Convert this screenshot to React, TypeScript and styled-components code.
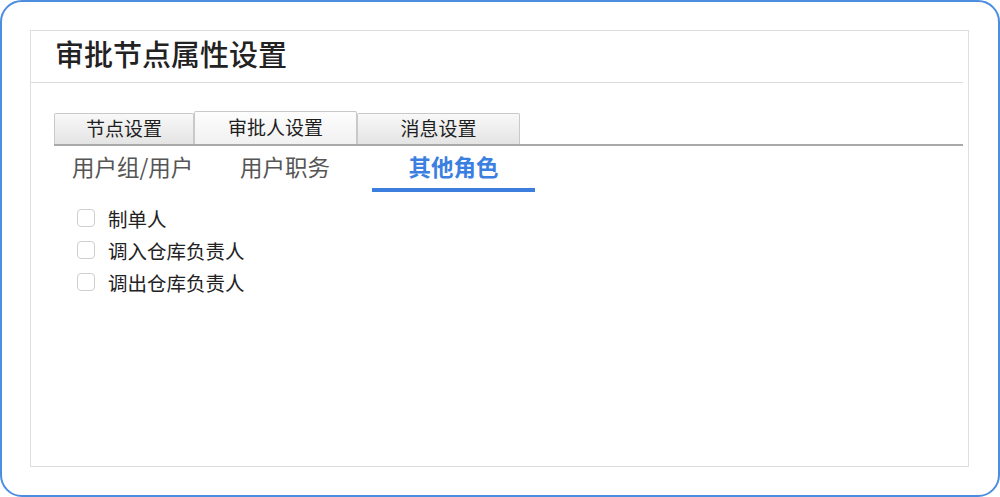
import React, { useState } from 'react';
import styled, { createGlobalStyle } from 'styled-components';

const GlobalStyle = createGlobalStyle`
  html, body {
    margin: 0;
    padding: 0;
    background: #ffffff;
  }
  body {
    font-family: "Noto Sans CJK SC", "Noto Sans", sans-serif;
    color: #222;
  }
`;

const Frame = styled.div`
  box-sizing: border-box;
  width: 1000px;
  height: 497px;
  border: 2px solid #4b8ddf;
  border-radius: 22px;
  background: #fff;
  padding: 28px 29px 28px 28px;
  display: flex;
`;

const Panel = styled.div`
  flex: 1;
  border: 1px solid #dedede;
  display: flex;
  flex-direction: column;
`;

const Header = styled.div`
  box-sizing: border-box;
  height: 52px;
  margin-right: 5px;
  border-bottom: 1px solid #dcdcdc;
  display: flex;
  align-items: center;
  padding: 0 0 7px 24px;
`;

const Title = styled.h1`
  margin: 0;
  font-size: 29px;
  font-weight: 500;
  color: #222;
  line-height: 1;
`;

const TabBar = styled.div`
  margin: 28px 5px 0 23px;
  height: 33px;
  display: flex;
  align-items: flex-end;
  border-bottom: 2px solid #a9a9a9;
`;

const Tab = styled.button<{ $active: boolean; $w: number }>`
  box-sizing: border-box;
  width: ${p => p.$w}px;
  height: ${p => (p.$active ? 33 : 31)}px;
  margin: 0;
  padding: 0 0 ${p => (p.$active ? 4 : 3)}px;
  border: 1px solid #c9c9c9;
  border-bottom: none;
  border-radius: 2px 2px 0 0;
  background: ${p =>
    p.$active
      ? 'linear-gradient(#fdfdfd, #f1f1f1)'
      : 'linear-gradient(#f8f8f8, #e4e4e4)'};
  font-family: inherit;
  font-size: 19px;
  color: #1e1e1e;
  line-height: 1;
  cursor: pointer;
`;

const SubTabs = styled.div`
  display: flex;
  padding-left: 41px;
  height: 46px;
`;

const SubTab = styled.div<{ $active: boolean; $w: number; $center?: boolean }>`
  box-sizing: border-box;
  width: ${p => p.$w}px;
  display: flex;
  align-items: center;
  justify-content: ${p => (p.$center ? 'center' : 'flex-start')};
  padding-bottom: 3px;
  font-size: 22.5px;
  font-weight: ${p => (p.$active ? 700 : 400)};
  color: ${p => (p.$active ? '#3b80e0' : '#555')};
  border-bottom: 4px solid ${p => (p.$active ? '#3b7ede' : 'transparent')};
  cursor: pointer;
`;

const RoleList = styled.div`
  display: flex;
  flex-direction: column;
  padding: 10px 0 0 46px;
`;

const RoleRow = styled.label`
  height: 32px;
  display: flex;
  align-items: center;
  gap: 13px;
  font-size: 19.5px;
  color: #222;
  cursor: pointer;
`;

const Box = styled.span<{ $checked: boolean }>`
  box-sizing: border-box;
  width: 18px;
  height: 18px;
  border: 1px solid #cfcfcf;
  border-radius: 4px;
  background: ${p => (p.$checked ? '#3b80e0' : '#fff')};
`;

const tabs = [
  { id: 'node', label: '节点设置', w: 140 },
  { id: 'approver', label: '审批人设置', w: 163 },
  { id: 'message', label: '消息设置', w: 163 },
];

const subTabs = [
  { id: 'group', label: '用户组/用户', w: 168 },
  { id: 'duty', label: '用户职务', w: 132 },
  { id: 'other', label: '其他角色', w: 163 },
];

const roles = ['制单人', '调入仓库负责人', '调出仓库负责人'];

export default function App() {
  const [tab, setTab] = useState('approver');
  const [sub, setSub] = useState('other');
  const [checked, setChecked] = useState<string[]>([]);

  const toggle = (r: string) =>
    setChecked(c => (c.includes(r) ? c.filter(x => x !== r) : [...c, r]));

  return (
    <>
      <GlobalStyle />
      <Frame>
        <Panel>
          <Header>
            <Title>审批节点属性设置</Title>
          </Header>
          <TabBar>
            {tabs.map(t => (
              <Tab key={t.id} $w={t.w} $active={tab === t.id} onClick={() => setTab(t.id)}>
                {t.label}
              </Tab>
            ))}
          </TabBar>
          <SubTabs>
            {subTabs.map(s => (
              <SubTab
                key={s.id}
                $w={s.w}
                $center={s.id === 'other'}
                $active={sub === s.id}
                onClick={() => setSub(s.id)}
              >
                {s.label}
              </SubTab>
            ))}
          </SubTabs>
          <RoleList>
            {roles.map(r => (
              <RoleRow key={r} onClick={() => toggle(r)}>
                <Box $checked={checked.includes(r)} />
                {r}
              </RoleRow>
            ))}
          </RoleList>
        </Panel>
      </Frame>
    </>
  );
}
